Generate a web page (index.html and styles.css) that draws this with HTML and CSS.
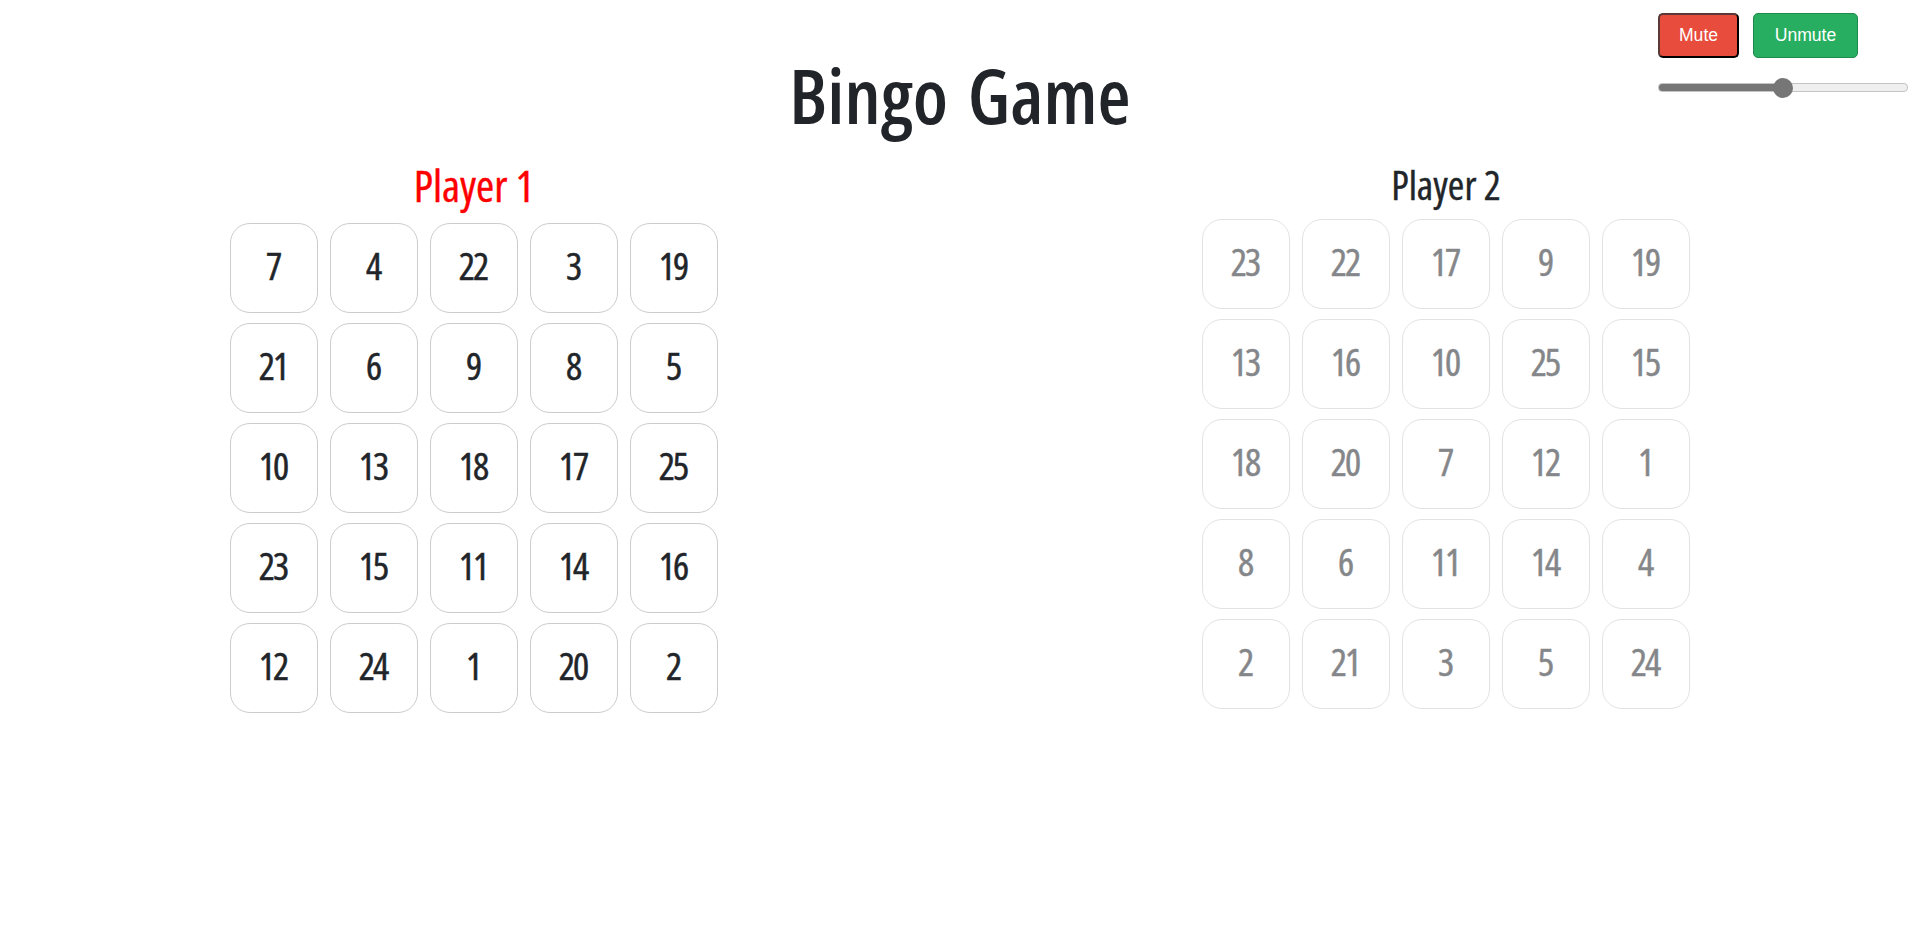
FILE: index.html
```html
<!DOCTYPE html>
<html lang="en">
<head>
  <meta charset="UTF-8">
  <meta name="viewport" content="width=device-width, initial-scale=1.0">
  <title>Bingo Game</title>
  <link rel="stylesheet" href="styles.css">
</head>
<body>

  <div class="sound-controls">
    <div class="sound-buttons">
      <button class="btn-mute">Mute</button>
      <button class="btn-unmute">Unmute</button>
    </div>
    <input type="range" class="volume" min="0" max="100" value="50">
  </div>

  <h1>Bingo Game</h1>

  <div class="boards">
    <div class="player active">
      <h2>Player 1</h2>
      <div class="board">
        <div class="cell">7</div><div class="cell">4</div><div class="cell">22</div><div class="cell">3</div><div class="cell">19</div>
        <div class="cell">21</div><div class="cell">6</div><div class="cell">9</div><div class="cell">8</div><div class="cell">5</div>
        <div class="cell">10</div><div class="cell">13</div><div class="cell">18</div><div class="cell">17</div><div class="cell">25</div>
        <div class="cell">23</div><div class="cell">15</div><div class="cell">11</div><div class="cell">14</div><div class="cell">16</div>
        <div class="cell">12</div><div class="cell">24</div><div class="cell">1</div><div class="cell">20</div><div class="cell">2</div>
      </div>
    </div>

    <div class="player waiting">
      <h2>Player 2</h2>
      <div class="board">
        <div class="cell">23</div><div class="cell">22</div><div class="cell">17</div><div class="cell">9</div><div class="cell">19</div>
        <div class="cell">13</div><div class="cell">16</div><div class="cell">10</div><div class="cell">25</div><div class="cell">15</div>
        <div class="cell">18</div><div class="cell">20</div><div class="cell">7</div><div class="cell">12</div><div class="cell">1</div>
        <div class="cell">8</div><div class="cell">6</div><div class="cell">11</div><div class="cell">14</div><div class="cell">4</div>
        <div class="cell">2</div><div class="cell">21</div><div class="cell">3</div><div class="cell">5</div><div class="cell">24</div>
      </div>
    </div>
  </div>

</body>
</html>
```

FILE: styles.css
```css
body {
  font-family: "Open Sans", "Noto Sans", sans-serif;
  font-stretch: 75%;
  margin: 0;
  padding: 0;
  background-color: #ffffff;
  color: #212529;
}
h1 {
  font-size: 76px;
  font-weight: 600;
  word-spacing: 6px;
  text-align: center;
  line-height: 96px;
  margin: 0;
  padding-top: 47px;
  padding-bottom: 1px;
}
.sound-controls {
  position: absolute;
  top: 13px;
  left: 1658px;
  width: 250px;
}
.sound-buttons {
  display: flex;
  gap: 14px;
}
.sound-buttons button {
  height: 45px;
  font-family: "Liberation Sans", Arial, sans-serif;
  font-size: 17.6px;
  color: white;
  border-radius: 5px;
  cursor: pointer;
  padding: 0;
}
.btn-mute {
  width: 81px;
  background-color: #e74c3c;
  border: 2px solid #000000;
  border-top-color: #5a3a36;
  border-left-color: #5a3a36;
}
.btn-unmute {
  width: 105px;
  background-color: #27ae60;
  border: 1px solid #1f8a4c;
}
.volume {
  -webkit-appearance: none;
  appearance: none;
  display: block;
  width: 248px;
  height: 7px;
  margin: 25px 0 0;
  border: 1px solid #c4c4c4;
  border-radius: 4px;
  background: linear-gradient(to right, #767676 50%, #efefef 50%);
}
.volume::-webkit-slider-thumb {
  -webkit-appearance: none;
  width: 20px;
  height: 20px;
  border-radius: 50%;
  background-color: #767676;
}
.boards {
  display: flex;
  align-items: flex-start;
  gap: 484px;
  padding-left: 230px;
}
.player h2 {
  font-weight: 500;
  -webkit-text-stroke: 0.4px currentColor;
  text-align: center;
  margin: 0;
}
.active h2 {
  font-size: 44px;
  line-height: 50px;
  margin-top: 16px;
  margin-bottom: 13px;
  color: #ff0000;
}
.waiting h2 {
  font-size: 40px;
  line-height: 48px;
  margin-top: 17px;
  margin-bottom: 10px;
}
.board {
  display: grid;
  grid-template-columns: repeat(5, 88px);
  grid-auto-rows: 90px;
  gap: 10px 12px;
}
.cell {
  display: flex;
  align-items: center;
  justify-content: center;
  border: 1px solid #cccccc;
  border-radius: 20px;
  font-size: 38px;
  font-weight: 500;
  -webkit-text-stroke: 0.5px currentColor;
  letter-spacing: -2px;
  padding: 0 2px 6px 0;
  box-sizing: border-box;
}
.waiting .board {
  opacity: 0.55;
}
```
